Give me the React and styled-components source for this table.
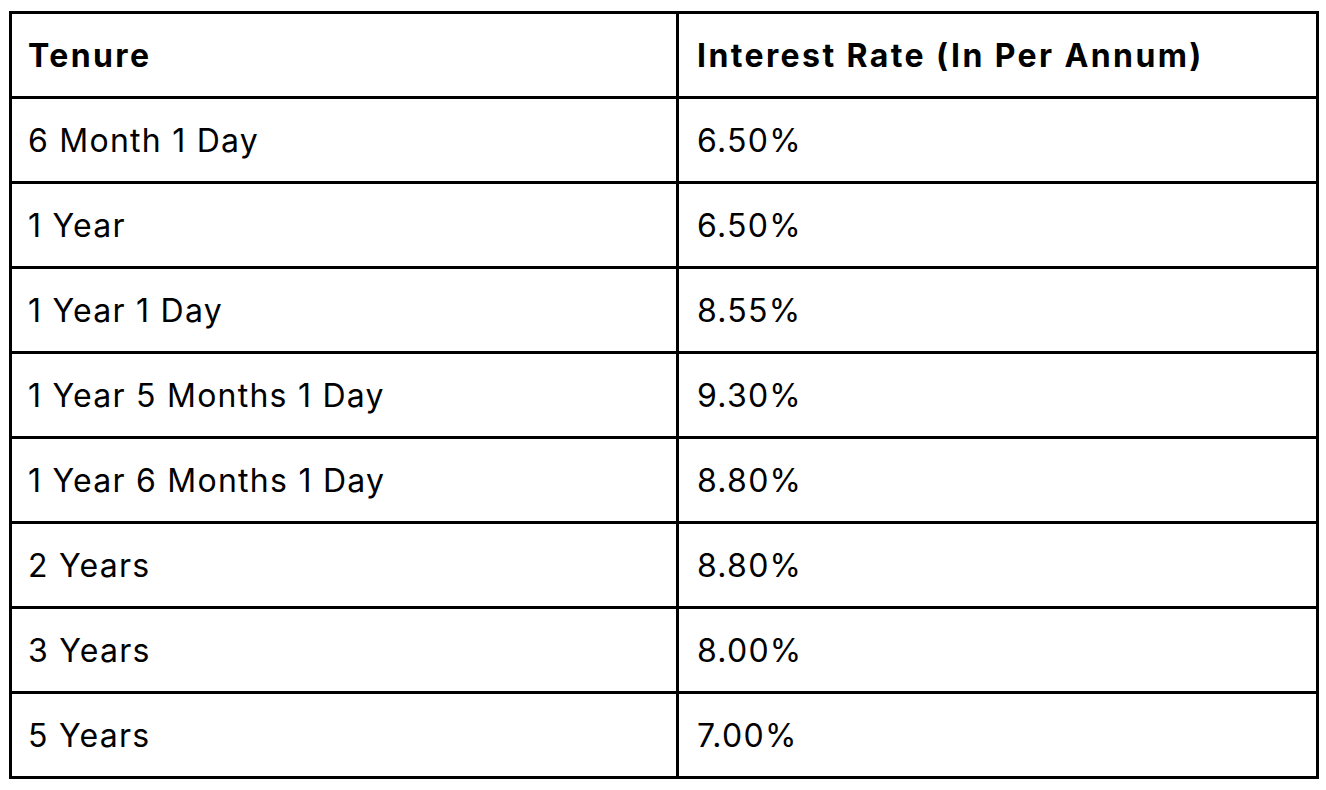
import React from 'react';
import styled, { createGlobalStyle } from 'styled-components';

const GlobalStyle = createGlobalStyle`
  html, body {
    margin: 0;
    padding: 0;
    background: #fff;
  }
  * {
    box-sizing: border-box;
  }
`;

const Page = styled.div`
  padding: 11px 0 0 9px;
  font-family: Inter, "Noto Sans", sans-serif;
  color: #000;
`;

const Table = styled.table`
  border-collapse: separate;
  border-spacing: 0;
  table-layout: fixed;
  width: 1310px;
  border-top: 3px solid #000;
  border-left: 3px solid #000;
`;

const Col = styled.col`
  width: ${({ wide }) => (wide ? '667px' : '640px')};
`;

const Cell = styled.td`
  height: 85px;
  padding: 0 0 0 ${({ second }) => (second ? '18px' : '16px')};
  border-right: 3px solid #000;
  border-bottom: 3px solid #000;
  font-size: 32px;
  font-weight: 400;
  letter-spacing: 1.25px;
  text-align: left;
  vertical-align: middle;
  white-space: nowrap;
`;

const HeadCell = styled(Cell).attrs({ as: 'th' })`
  font-weight: 700;
  letter-spacing: 2.4px;
`;

const rates = [
  ['6 Month 1 Day', '6.50%'],
  ['1 Year', '6.50%'],
  ['1 Year 1 Day', '8.55%'],
  ['1 Year 5 Months 1 Day', '9.30%'],
  ['1 Year 6 Months 1 Day', '8.80%'],
  ['2 Years', '8.80%'],
  ['3 Years', '8.00%'],
  ['5 Years', '7.00%'],
];

const App = () => (
  <Page>
    <GlobalStyle />
    <Table>
      <colgroup>
        <Col wide />
        <Col />
      </colgroup>
      <thead>
        <tr>
          <HeadCell>Tenure</HeadCell>
          <HeadCell second>Interest Rate (In Per Annum)</HeadCell>
        </tr>
      </thead>
      <tbody>
        {rates.map(([tenure, rate]) => (
          <tr key={tenure}>
            <Cell>{tenure}</Cell>
            <Cell second>{rate}</Cell>
          </tr>
        ))}
      </tbody>
    </Table>
  </Page>
);

export default App;
